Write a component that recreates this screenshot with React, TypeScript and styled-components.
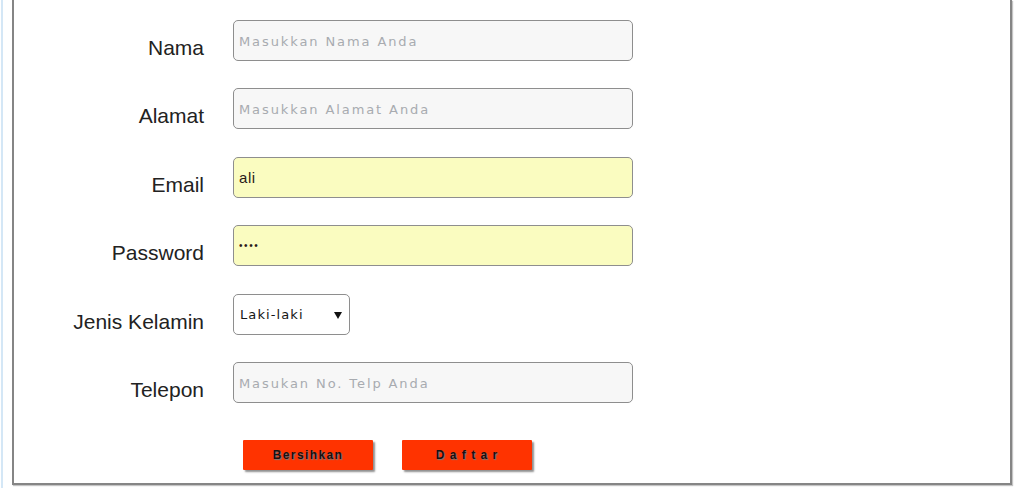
import React from "react";
import styled, { createGlobalStyle } from "styled-components";

const GlobalStyle = createGlobalStyle`
  html, body {
    margin: 0;
    padding: 0;
    background: #ffffff;
    font-family: "Liberation Sans", Arial, sans-serif;
  }
`;

const Page = styled.div`
  margin-left: 1px;
  border-left: 2px solid #d4e7f6;
  padding-left: 9px;
  height: 488px;
  box-sizing: border-box;
`;

const Frame = styled.div`
  width: 1000px;
  height: 485px;
  box-sizing: border-box;
  border: 2px solid #858585;
  border-top: none;
  box-shadow: 1px 1px 1px #c4c4c4;
  background: #ffffff;
  padding-top: 20px;
`;

const Form = styled.form`
  display: grid;
  grid-template-columns: 190px 400px;
  grid-auto-rows: 41px;
  column-gap: 29px;
  row-gap: 27.4px;
  margin: 0;
`;

const Label = styled.label`
  align-self: end;
  justify-self: end;
  margin-bottom: 1px;
  font-family: "Liberation Sans", Arial, sans-serif;
  font-size: 21px;
  line-height: 24px;
  color: #222222;
`;

const Field = styled.input<{ $filled?: boolean; $secret?: boolean }>`
  width: 100%;
  height: 100%;
  box-sizing: border-box;
  margin: 0;
  border: 1px solid #8e8e8e;
  border-radius: 5px;
  background: ${(p) => (p.$filled ? "#fafcc0" : "#f7f7f7")};
  padding: 0 6px 0 5px;
  font-family: "Liberation Sans", Arial, sans-serif;
  font-size: ${(p) => (p.$secret ? "10px" : "15px")};
  letter-spacing: ${(p) => (p.$secret ? "1.6px" : "0.6px")};
  color: #2a1a1a;
  outline: none;

  &::placeholder {
    font-family: "DejaVu Sans", Verdana, sans-serif;
    font-size: 13px;
    letter-spacing: 1.9px;
    color: #a8abb0;
  }
`;

const SelectWrap = styled.div`
  position: relative;
  width: 117px;
  height: 100%;
`;

const Select = styled.select`
  appearance: none;
  -webkit-appearance: none;
  width: 100%;
  height: 100%;
  box-sizing: border-box;
  margin: 0;
  border: 1px solid #8e8e8e;
  border-radius: 5px;
  background: #ffffff;
  padding: 0 0 0 6px;
  font-family: "DejaVu Sans", Verdana, sans-serif;
  font-size: 13px;
  letter-spacing: 1.1px;
  color: #151515;
  outline: none;
`;

const Caret = styled.span`
  position: absolute;
  right: 8px;
  top: 18px;
  width: 0;
  height: 0;
  border-left: 4px solid transparent;
  border-right: 4px solid transparent;
  border-top: 7px solid #111111;
  pointer-events: none;
`;

const Actions = styled.div`
  grid-column: 2;
  display: flex;
  gap: 29px;
  padding-left: 10px;
  margin-top: 9.5px;
`;

const Button = styled.button<{ $spread?: boolean }>`
  width: 130px;
  height: 30px;
  border: none;
  border-radius: 1px;
  background: #ff3300;
  box-shadow: 2px 2px 2px #8f8f8f;
  font-family: "Liberation Sans", Arial, sans-serif;
  font-weight: bold;
  font-size: 12px;
  letter-spacing: ${(p) => (p.$spread ? "1px" : "1.4px")};
  color: #1a1010;
  text-shadow: 1px 1px 1px #7a7a7a;
  cursor: pointer;
  padding: 0;
`;

export default function App() {
  return (
    <>
      <GlobalStyle />
      <Page>
        <Frame>
          <Form onSubmit={(e) => e.preventDefault()}>
            <Label htmlFor="nama">Nama</Label>
            <Field id="nama" type="text" placeholder="Masukkan Nama Anda" />

            <Label htmlFor="alamat">Alamat</Label>
            <Field id="alamat" type="text" placeholder="Masukkan Alamat Anda" />

            <Label htmlFor="email">Email</Label>
            <Field id="email" type="text" $filled defaultValue="ali" />

            <Label htmlFor="password">Password</Label>
            <Field id="password" type="password" $filled $secret defaultValue="abcd" />

            <Label htmlFor="jk">Jenis Kelamin</Label>
            <SelectWrap>
              <Select id="jk" defaultValue="L">
                <option value="L">Laki-laki</option>
                <option value="P">Perempuan</option>
              </Select>
              <Caret />
            </SelectWrap>

            <Label htmlFor="telp">Telepon</Label>
            <Field id="telp" type="text" placeholder="Masukan No. Telp Anda" />

            <Actions>
              <Button type="reset">Bersihkan</Button>
              <Button type="submit" $spread>
                D a f t a r
              </Button>
            </Actions>
          </Form>
        </Frame>
      </Page>
    </>
  );
}
